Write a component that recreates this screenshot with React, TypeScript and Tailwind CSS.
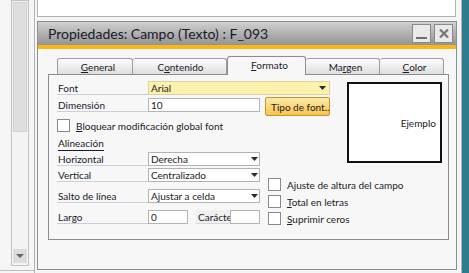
import React from "react";

const Arrow = () => (
  <svg width="7" height="4" viewBox="0 0 7 4" className="shrink-0">
    <path d="M0 0H7L3.5 4Z" fill="#2a2a2a" />
  </svg>
);

function Label({ children, className = "" }: { children: React.ReactNode; className?: string }) {
  return (
    <div className={`h-[14px] w-[91px] shrink-0 border-b border-[#c8d1db] pl-[1px] flex items-center leading-none ${className}`}>
      {children}
    </div>
  );
}

function Combo({ value }: { value: string }) {
  return (
    <div className="h-[14px] w-[112px] shrink-0 border border-[#b3b3b3] bg-white flex items-center justify-between pl-[2px] pr-px leading-none">
      <span>{value}</span>
      <Arrow />
    </div>
  );
}

function Check({ children }: { children: React.ReactNode }) {
  return (
    <div className="flex items-center h-[13px] leading-none">
      <div className="w-[13px] h-[13px] shrink-0 border border-[#8a8a8a] bg-white" />
      <span className="ml-[6px] whitespace-nowrap">{children}</span>
    </div>
  );
}

export default function App() {
  return (
    <div className="flex h-[273px] w-[469px] overflow-hidden bg-[#f5f5f5] font-['Lato',sans-serif] text-[10px] text-[#1a1a28]">
      {/* left scrollbar */}
      <div className="w-[34px] shrink-0 flex flex-col">
        <div className="pl-[11px] h-[266px]">
          <div className="w-[18px] h-[266px] border border-[#c2c2c2] bg-[#f3f3f3] p-px flex flex-col">
            <div className="h-[130px] bg-[#dedede] border border-[#d2d2d2]" />
            <div className="flex-1" />
            <div className="h-[14px] mb-px bg-[#dcdcdc] flex items-center justify-center">
              <svg width="8" height="4" viewBox="0 0 8 4">
                <path d="M0 0H8L4 4Z" fill="#666" />
              </svg>
            </div>
          </div>
        </div>
        <div className="mt-[4px] border-b border-[#bdbdbd]" />
      </div>

      {/* middle */}
      <div className="w-[428px] shrink-0 border-l border-r border-[#b3b3b3] flex flex-col">
        <div className="h-[17px] ml-[2px] mr-[5px] bg-white border-l border-r border-b border-[#b0b0b0]" />
        <div className="h-[4px]" />
        <div className="ml-[2px] mr-[4px] h-[249px] border border-[#8e8e8e] flex flex-col bg-[#f7f7f7]">
          {/* title bar */}
          <div className="h-[23px] shrink-0 bg-gradient-to-b from-[#d0d0d0] to-[#939393] flex items-center pl-[10px] pr-[3px]">
            <span className="text-[14px] leading-none text-[#1a1a28] whitespace-nowrap">
              Propiedades: Campo (Texto) : F_093
            </span>
            <div className="flex-1" />
            <div className="w-[19px] h-[19px] border border-[#8a8a8a] bg-[#e9e9e9] flex items-end justify-center pb-[3px]">
              <div className="w-[11px] h-[2px] bg-[#6e6e6e]" />
            </div>
            <div className="w-[19px] h-[19px] ml-[3px] border border-[#8a8a8a] bg-[#e9e9e9] flex items-center justify-center">
              <svg width="10" height="9" viewBox="0 0 10 9">
                <path d="M1 0.5L9 8.5M9 0.5L1 8.5" stroke="#767676" strokeWidth="2.2" />
              </svg>
            </div>
          </div>
          <div className="h-[4px] shrink-0 bg-[#fbb616]" />

          {/* body */}
          <div className="flex-1 pl-[10px] pt-[7px]">
            {/* tabs */}
            <div className="h-[18px] flex items-end pl-[9px]">
              <div className="w-[76px] h-[16px] border border-b-0 border-[#9c9c9c] rounded-t-[3px] bg-gradient-to-b from-[#fdfdfd] to-[#dedede] flex items-center justify-center pl-[6px] leading-none">
                <span><span className="underline underline-offset-1">G</span>eneral</span>
              </div>
              <div className="w-[94px] h-[16px] border border-b-0 border-l-0 border-[#9c9c9c] rounded-t-[3px] bg-gradient-to-b from-[#fdfdfd] to-[#dedede] flex items-center justify-center pl-[2px] leading-none">
                <span>C<span className="underline underline-offset-1">o</span>ntenido</span>
              </div>
              <div className="relative z-10 w-[79px] h-[19px] -mb-px border border-b-0 border-[#8c8c8c] rounded-t-[3px] bg-[#f7f7f7] flex items-center justify-center pl-[6px] pb-[2px] leading-none">
                <span><span className="underline underline-offset-1">F</span>ormato</span>
              </div>
              <div className="w-[74px] h-[16px] border border-b-0 border-l-0 border-[#9c9c9c] rounded-t-[3px] bg-gradient-to-b from-[#fdfdfd] to-[#dedede] flex items-center justify-center pl-[6px] leading-none">
                <span>Ma<span className="underline underline-offset-1">r</span>gen</span>
              </div>
              <div className="w-[64px] h-[16px] border border-b-0 border-l-0 border-[#9c9c9c] rounded-t-[3px] bg-gradient-to-b from-[#fdfdfd] to-[#dedede] flex items-center justify-center pl-[6px] leading-none">
                <span><span className="underline underline-offset-1">C</span>olor</span>
              </div>
            </div>

            {/* panel */}
            <div className="w-[401px] h-[166px] border border-[#8c8c8c] bg-[#f7f7f7] pl-[8px] pt-[6px] flex flex-col">
              {/* upper */}
              <div className="flex">
                <div className="w-[273px] flex flex-col">
                  <div className="flex">
                    <Label>Font</Label>
                    <div className="h-[14px] w-[182px] border border-[#d8d2a6] bg-[#fdf1ae] flex items-center justify-between pl-[2px] pr-[3px] leading-none">
                      <span>Arial</span>
                      <Arrow />
                    </div>
                  </div>
                  <div className="flex items-start mt-[3px]">
                    <Label>Dimensión</Label>
                    <div className="h-[14px] w-[112px] border border-[#b3b3b3] bg-white flex items-center pl-[2px] leading-none">10</div>
                    <div className="ml-[5px] -mt-px h-[19px] w-[65px] border border-[#c4952e] rounded-[2px] bg-gradient-to-b from-[#fde9a3] to-[#f6c449] flex items-center pl-[5px] overflow-hidden whitespace-nowrap leading-none">
                      Tipo de font..
                    </div>
                  </div>
                  <div className="mt-[3px]">
                    <Check>
                      <span className="underline underline-offset-1">B</span>loquear modificación global font
                    </Check>
                  </div>
                  <div className="mt-[5px] h-[14px] flex items-center pl-px leading-none">
                    <span className="border-b border-[#1a1a28] pb-[2px]">Alineación</span>
                  </div>
                  <div className="flex mt-px">
                    <Label>Horizontal</Label>
                    <Combo value="Derecha" />
                  </div>
                </div>
                <div className="ml-[17px] mt-px w-[95px] h-[81px] border-2 border-[#111] bg-white flex items-center justify-end pr-[4px] leading-none">
                  Ejemplo
                </div>
              </div>
              {/* lower */}
              <div className="flex">
                <div className="w-[203px] flex flex-col">
                  <div className="flex mt-[2px]">
                    <Label>Vertical</Label>
                    <Combo value="Centralizado" />
                  </div>
                  <div className="flex mt-[7px]">
                    <Label>Salto de línea</Label>
                    <Combo value="Ajustar a celda" />
                  </div>
                  <div className="flex mt-[7px]">
                    <Label>Largo</Label>
                    <div className="h-[14px] w-[40px] shrink-0 border border-[#b3b3b3] bg-white flex items-center pl-[2px] leading-none">0</div>
                    <div className="ml-[8px] h-[14px] w-[34px] shrink-0 border-b border-[#d3d9e0] bg-[#f0f0f0] pl-[2px] flex items-center overflow-hidden whitespace-nowrap leading-none">
                      Carácter
                    </div>
                    <div className="h-[14px] w-[30px] shrink-0 border border-[#b3b3b3] bg-white" />
                  </div>
                </div>
                <div className="ml-[8px] pt-[12px] flex flex-col gap-[4px]">
                  <Check>Ajuste de altura del campo</Check>
                  <Check>
                    <span className="underline underline-offset-1">T</span>otal en letras
                  </Check>
                  <Check>
                    <span className="underline underline-offset-1">S</span>uprimir ceros
                  </Check>
                </div>
              </div>
            </div>
          </div>
        </div>
      </div>

      {/* right */}
      <div className="flex-1 bg-[#2f7c8f]" />
    </div>
  );
}
